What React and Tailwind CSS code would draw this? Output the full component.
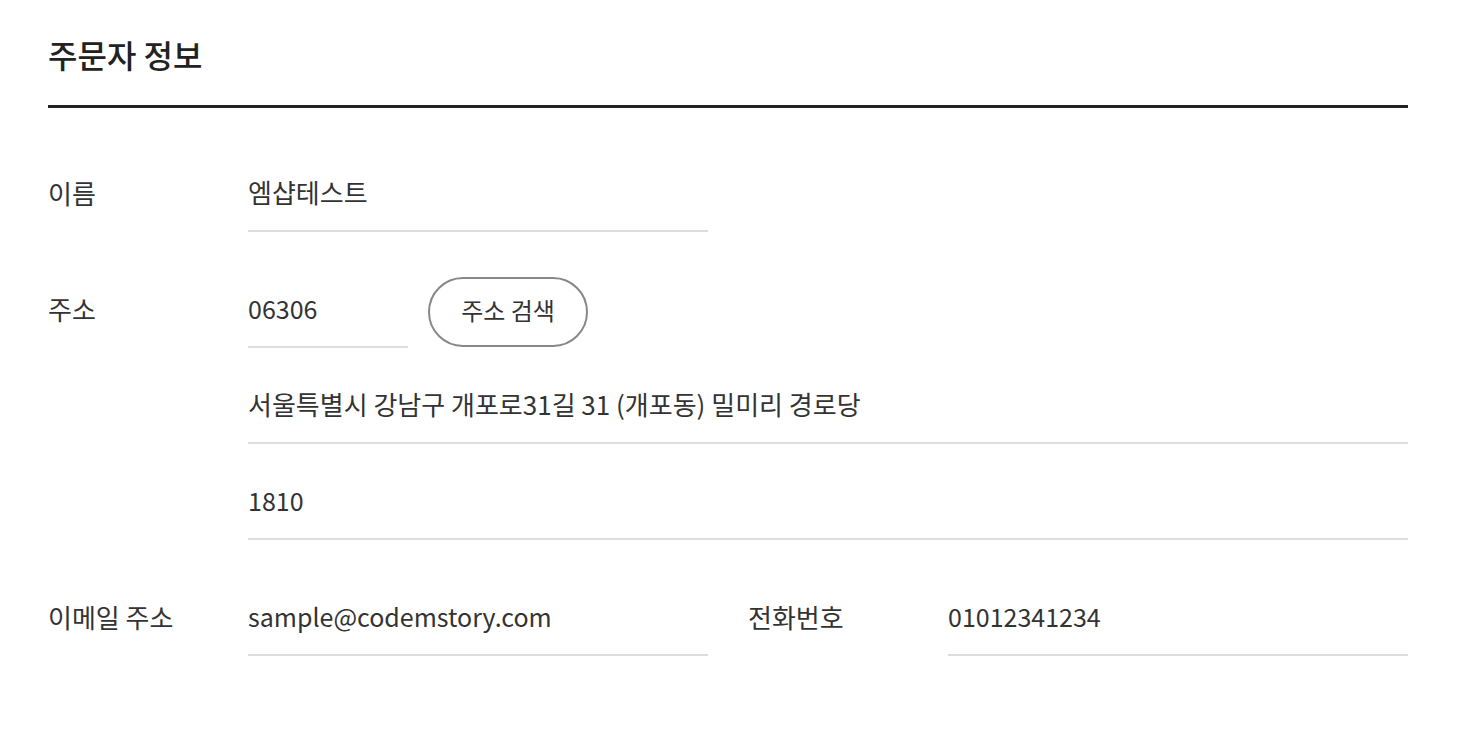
export default function App() {
  const font = { fontFamily: '"Noto Sans CJK KR", "Noto Sans", sans-serif' };
  const inputCls =
    "h-[72px] pb-[6px] border-b-2 border-[#dddddd] flex items-center text-[#333333] leading-[34px]";
  const ko = " text-[26px]";
  const en = " text-[25px]";
  const labelCls = "w-[200px] shrink-0 flex items-center h-[72px] pb-[8px] text-[26px] text-[#333333]";
  return (
    <div className="bg-white min-h-[732px] pl-[48px] pr-[50px] pt-[31px]" style={font}>
      <h2 className="text-[32px] leading-[46px] font-medium text-[#222222] pb-[28px]">주문자 정보</h2>
      <div className="h-[3px] bg-[#222222]" />

      <div className="mt-[52px] flex flex-col gap-[44px]">
        <div className="flex">
          <div className={labelCls}>이름</div>
          <div className={inputCls + ko + " w-[460px]"}>엠샵테스트</div>
        </div>

        <div className="flex">
          <div className={labelCls + " self-start"}>주소</div>
          <div className="flex-1 flex flex-col gap-[24px]">
            <div className="flex items-center gap-[20px]">
              <div className={inputCls + en + " w-[160px]"}>06306</div>
              <button className="w-[160px] h-[70px] pb-[4px] rounded-full border-2 border-[#888888] text-[24px] text-[#333333] bg-white">
                주소 검색
              </button>
            </div>
            <div className={inputCls + ko}>서울특별시 강남구 개포로31길 31 (개포동) 밀미리 경로당</div>
            <div className={inputCls + en}>1810</div>
          </div>
        </div>

        <div className="flex gap-[40px]">
          <div className="flex">
            <div className={labelCls}>이메일 주소</div>
            <div className={inputCls + en + " w-[460px]"}>sample@codemstory.com</div>
          </div>
          <div className="flex">
            <div className={labelCls}>전화번호</div>
            <div className={inputCls + en + " w-[460px]"}>01012341234</div>
          </div>
        </div>
      </div>
    </div>
  );
}
